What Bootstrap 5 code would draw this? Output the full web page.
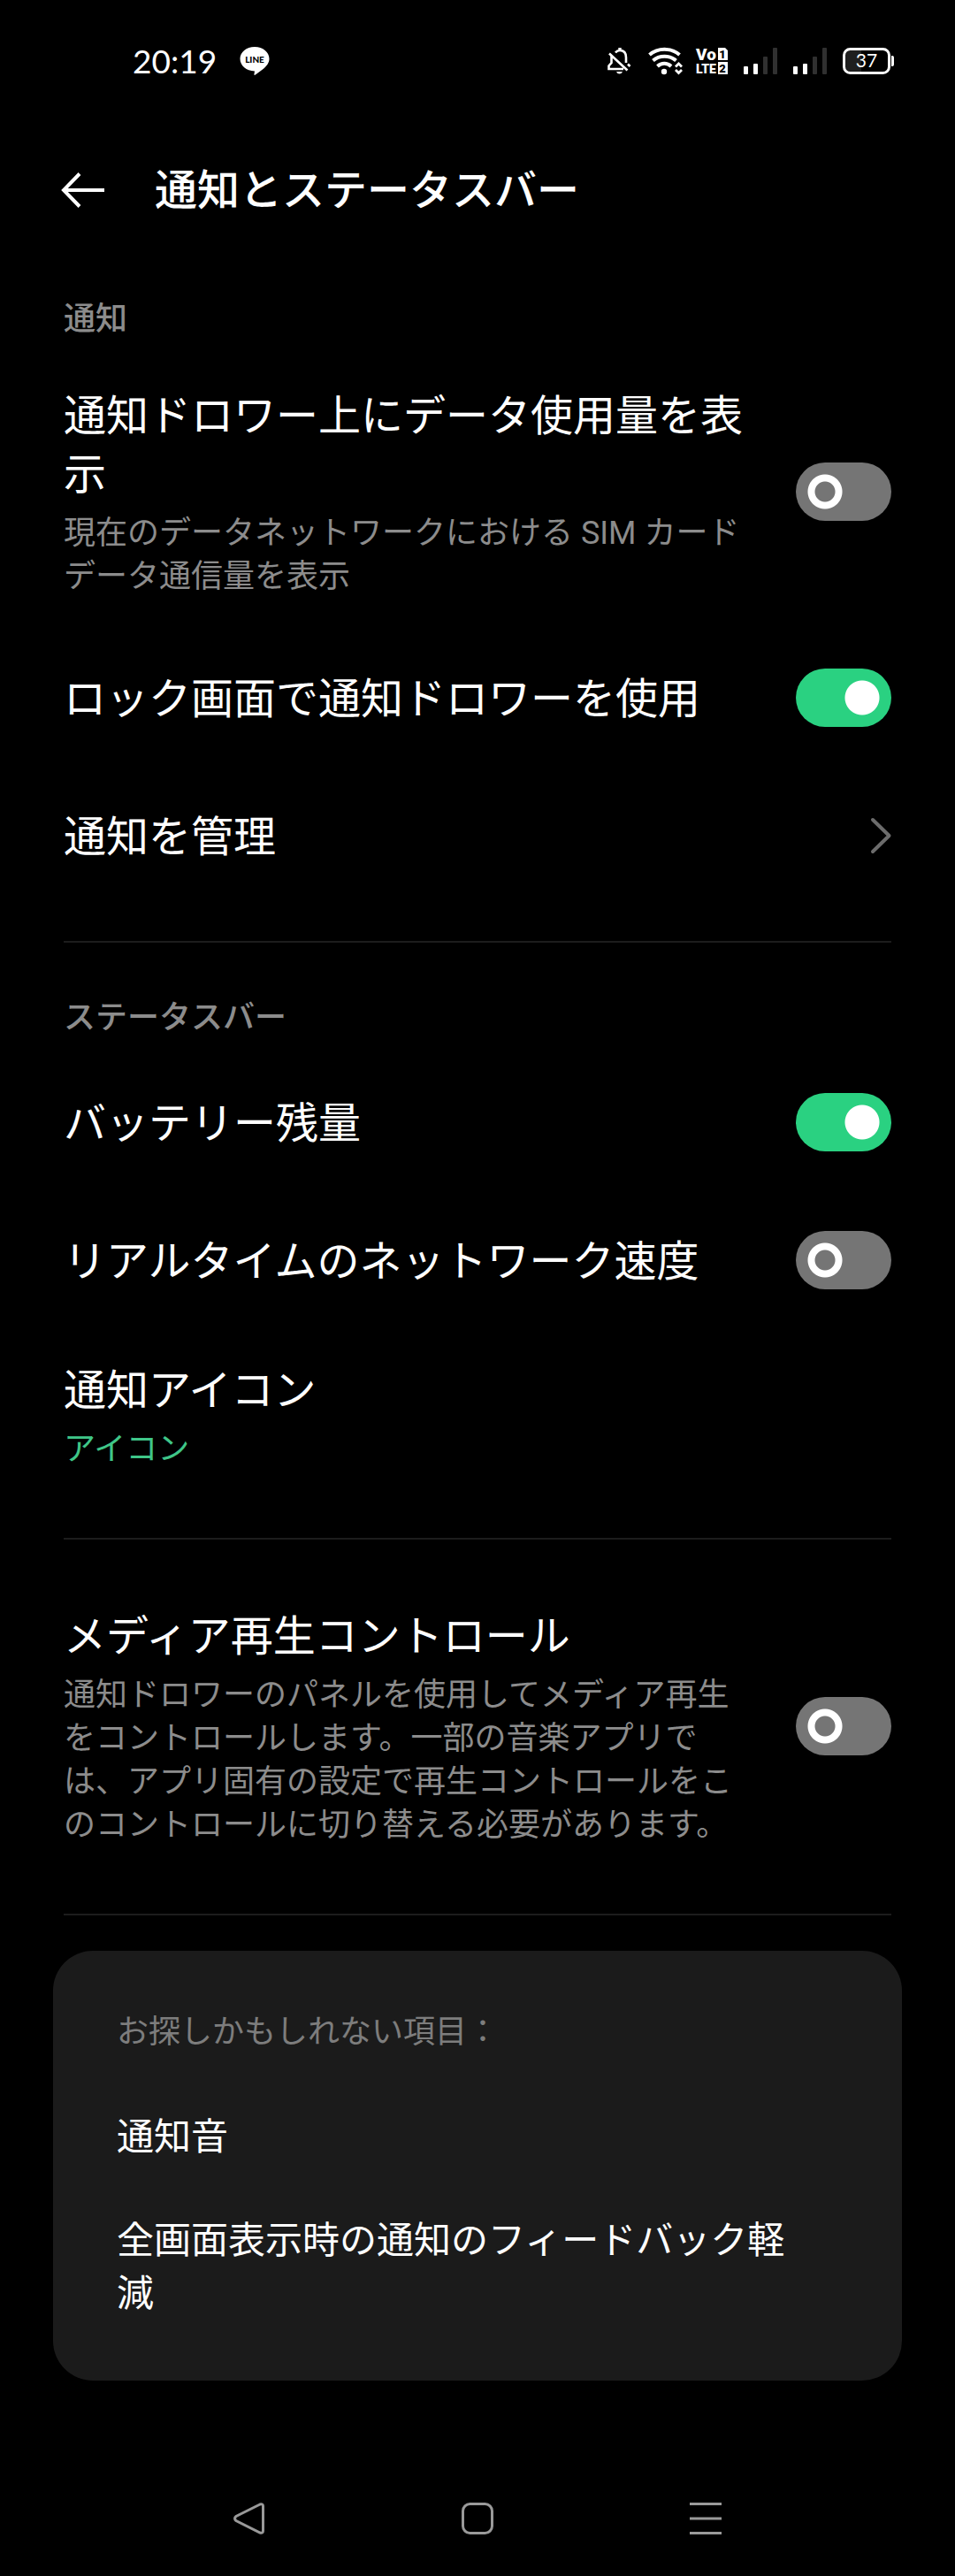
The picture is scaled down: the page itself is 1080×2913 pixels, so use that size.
<!DOCTYPE html>
<html lang="ja" data-bs-theme="dark">
<head>
<meta charset="utf-8">
<meta name="viewport" content="width=device-width, initial-scale=1">
<title>通知とステータスバー</title>
<link href="https://cdn.jsdelivr.net/npm/bootstrap@5.3.0/dist/css/bootstrap.min.css" rel="stylesheet">
<style>
  body { background: #000; color: #fff; font-family: Roboto, "Noto Sans CJK JP", sans-serif; }
  svg { display: block; flex: none; overflow: visible; }

  .status-bar { height: 138px; padding: 0 69px 0 150px; }
  .clock { font: 400 37px/48px Lato, sans-serif; }
  .status-left { gap: 26px; }
  .status-right { gap: 15px; }

  .app-bar { height: 122px; padding: 0 69px; gap: 56px; }
  .app-title { font-size: 48px; line-height: 66px; font-weight: 500; padding-top: 2px; }

  .settings-list { padding: 0 72px; }
  .group-label { font-size: 36px; line-height: 48px; font-weight: 500; color: #8c8c8c; margin: 61px 0 16px; }
  .setting-row { min-height: 156px; padding: 34px 0; gap: 48px; color: #fff; }
  .setting-text { padding-top: 3px; }
  .setting-name { font-size: 48px; line-height: 66px; }
  .setting-note { font-size: 36px; line-height: 49px; color: #8c8c8c; margin-top: 9px; }
  .note-accent { color: #3fc688; }
  .rule { height: 2px; margin: 41px 0 40px; background: #1c1c1c; border: 0; opacity: 1; }

  .toggle.form-check-input {
    width: 108px; height: 66px; margin: 0; border: 0; border-radius: 33px; flex: none;
    background-color: #757575;
    background-image: radial-gradient(circle at 33px 33px, transparent 11px, #fff 12px, #fff 19px, transparent 20px);
    background-size: 100% 100%; background-position: 0 0;
  }
  .toggle.form-check-input:checked {
    background-color: #2ad181;
    background-image: radial-gradient(circle at 75px 33px, #fff 19px, transparent 20px);
  }

  .related { margin: 0 60px; padding: 68px 96px 68px 72px; background: #1b1b1b; border-radius: 45px; }
  .related-label { font-size: 36px; line-height: 48px; color: #7d7d7d; margin-bottom: 65px; }
  .related-items { gap: 57px; }
  .related-items a { font-size: 42px; line-height: 60px; color: #fff; }

  .nav-keys { height: 131px; margin-top: 90px; }
  .nav-keys button { width: 258px; }
</style>
</head>
<body>
<header>
  <div class="status-bar d-flex align-items-center justify-content-between mb-3">
    <div class="status-left d-flex align-items-center">
      <span class="clock">20:19</span>
      <svg width="34" height="32" viewBox="0 0 34 32" role="img" aria-label="LINE">
        <path fill="#fff" d="M17 0C26.400 0 33.500 6 33.500 13.500C33.500 18 30.500 22 26 25.500L17.500 31.800C16.500 32.200 16.300 31.500 16.500 30.500L17 27.400C7.500 27.400 .5 21 .5 13.500S7.600 0 17 0Z"/>
        <text x="17" y="18" text-anchor="middle" font-family="Lato, sans-serif" font-size="10" font-weight="900" fill="#000">LINE</text>
      </svg>
    </div>
    <div class="status-right d-flex align-items-center">
      <svg width="34" height="32" viewBox="0 0 34 32" fill="none" stroke="#fff" stroke-width="2.600" aria-hidden="true">
        <path d="M12 6.500C13 5.200 15 4 17 4C21.500 4 24 7 24 12V18M7.500 10.500V18L4.500 21.500V25H21M26 19.500L28.500 22M5 7.500L25.500 26.500"/>
        <path d="M15.300 1H18.700V4H15.300ZM13 28H20Q19 30.500 16.500 30.500Q14 30.500 13 28Z" fill="#fff" stroke="none"/>
      </svg>
      <svg width="39" height="32" viewBox="0 0 39 32" fill="none" stroke="#fff" stroke-width="4" aria-hidden="true">
        <path d="M1.500 9C11 .6 26 .6 35.500 9M5.500 15.500C12.500 9 24.500 9 31.500 15.500M10.500 22C15 17.800 21.500 17.800 26 22"/>
        <circle cx="18" cy="28" r="3.200" fill="#fff" stroke="none"/>
        <path stroke-width="2.800" d="M31 22.500L34.500 19L38 22.500M31 26L34.500 29.500L38 26"/>
      </svg>
      <svg width="36" height="32" viewBox="0 0 36 32" role="img" aria-label="VoLTE 1 2" font-family="Roboto, sans-serif" font-weight="900" fill="#fff">
        <text x="0" y="15" font-size="19">Vo</text>
        <text x="0" y="30" font-size="14">LTE</text>
        <path d="M25 1H33L36 4V15H25ZM25 17H36V31H25Z"/>
        <g font-size="13" fill="#000" text-anchor="middle">
          <text x="30" y="13">1</text>
          <text x="30" y="29">2</text>
        </g>
      </svg>
      <svg width="44" height="32" viewBox="-3 0 44 32" fill="#fff" aria-hidden="true">
        <rect x="0" y="22" width="5" height="9" rx="1"/><rect x="11" y="19" width="5" height="12" rx="1"/>
        <g fill="#303030"><rect x="22" y="11" width="5" height="20" rx="1"/><rect x="33" y="1" width="5" height="30" rx="1"/></g>
      </svg>
      <svg width="41" height="32" viewBox="0 0 41 32" fill="#fff" aria-hidden="true">
        <rect x="0" y="22" width="5" height="9" rx="1"/><rect x="11" y="19" width="5" height="12" rx="1"/>
        <g fill="#303030"><rect x="22" y="11" width="5" height="20" rx="1"/><rect x="33" y="1" width="5" height="30" rx="1"/></g>
      </svg>
      <svg width="58" height="32" viewBox="0 0 58 32" role="img" aria-label="37%">
        <path fill="#1f1f1f" d="M3 3H21V29H3Z"/>
        <rect x="1.500" y="2.500" width="51" height="27" rx="7" fill="none" stroke="#fff" stroke-width="3"/>
        <path fill="#fff" d="M55 10H56Q58 10 58 12V20Q58 22 56 22H55Z"/>
        <text x="27" y="23" text-anchor="middle" font-family="Lato, sans-serif" font-size="21" fill="#fff">37</text>
      </svg>
    </div>
  </div>
  <div class="app-bar d-flex align-items-center">
    <button type="button" class="btn p-0 border-0" aria-label="戻る">
      <svg width="50" height="40" viewBox="0 0 50 40" fill="none" stroke="#fff" stroke-width="4"><path d="M21 1.500L3 20L21 38.500M3 20H49"/></svg>
    </button>
    <h1 class="app-title mb-0">通知とステータスバー</h1>
  </div>
</header>

<main>
  <div class="settings-list">
    <section>
      <h2 class="group-label">通知</h2>
      <label class="setting-row d-flex align-items-center justify-content-between" for="data-usage">
        <span class="setting-text">
          <span class="setting-name d-block">通知ドロワー上にデータ使用量を表示</span>
          <span class="setting-note d-block">現在のデータネットワークにおける SIM カードデータ通信量を表示</span>
        </span>
        <input class="toggle form-check-input" type="checkbox" role="switch" id="data-usage">
      </label>
      <label class="setting-row d-flex align-items-center justify-content-between" for="lock-drawer">
        <span class="setting-text setting-name">ロック画面で通知ドロワーを使用</span>
        <input class="toggle form-check-input" type="checkbox" role="switch" id="lock-drawer" checked>
      </label>
      <a class="setting-row d-flex align-items-center justify-content-between text-decoration-none" href="#manage">
        <span class="setting-text setting-name">通知を管理</span>
        <svg width="24" height="42" viewBox="0 0 24 42" fill="none" stroke="#6c6c6c" stroke-width="4" stroke-linecap="round" stroke-linejoin="round" aria-hidden="true"><path d="M3 3L21.500 21L3 39"/></svg>
      </a>
    </section>
    <hr class="rule">
    <section>
      <h2 class="group-label">ステータスバー</h2>
      <label class="setting-row d-flex align-items-center justify-content-between" for="battery">
        <span class="setting-text setting-name">バッテリー残量</span>
        <input class="toggle form-check-input" type="checkbox" role="switch" id="battery" checked>
      </label>
      <label class="setting-row d-flex align-items-center justify-content-between" for="net-speed">
        <span class="setting-text setting-name">リアルタイムのネットワーク速度</span>
        <input class="toggle form-check-input" type="checkbox" role="switch" id="net-speed">
      </label>
      <a class="setting-row d-block text-decoration-none" href="#icons">
        <span class="setting-text d-block">
          <span class="setting-name d-block">通知アイコン</span>
          <span class="setting-note note-accent d-block">アイコン</span>
        </span>
      </a>
    </section>
    <hr class="rule">
    <section>
      <label class="setting-row d-flex align-items-center justify-content-between" for="media">
        <span class="setting-text">
          <span class="setting-name d-block">メディア再生コントロール</span>
          <span class="setting-note d-block">通知ドロワーのパネルを使用してメディア再生をコントロールします。一部の音楽アプリでは、アプリ固有の設定で再生コントロールをこのコントロールに切り替える必要があります。</span>
        </span>
        <input class="toggle form-check-input" type="checkbox" role="switch" id="media">
      </label>
    </section>
    <hr class="rule">
  </div>
  <section class="related">
    <p class="related-label">お探しかもしれない項目：</p>
    <div class="related-items d-flex flex-column">
      <a class="text-decoration-none" href="#sound">通知音</a>
      <a class="text-decoration-none" href="#fullscreen">全画面表示時の通知のフィードバック軽減</a>
    </div>
  </section>
</main>

<nav class="nav-keys d-flex justify-content-center align-items-center" aria-label="ナビゲーション">
  <button type="button" class="btn p-0 border-0 d-flex justify-content-center" aria-label="戻る">
    <svg width="36" height="36" viewBox="0 0 36 36" fill="none" stroke="#999" stroke-width="3"><path d="M30 2L3 15.500Q0 18 3 20.500L30 34Q33.500 35 33.500 32V4Q33.500 1 30 2Z"/></svg>
  </button>
  <button type="button" class="btn p-0 border-0 d-flex justify-content-center" aria-label="ホーム">
    <svg width="36" height="36" viewBox="0 0 36 36" fill="none" stroke="#999" stroke-width="3"><rect x="1.500" y="1.500" width="33" height="33" rx="8"/></svg>
  </button>
  <button type="button" class="btn p-0 border-0 d-flex justify-content-center" aria-label="履歴">
    <svg width="36" height="36" viewBox="0 0 36 36" fill="none" stroke="#999" stroke-width="3"><path d="M0 1.500H36M0 18H36M0 34.500H36"/></svg>
  </button>
</nav>
<script src="https://cdn.jsdelivr.net/npm/bootstrap@5.3.0/dist/js/bootstrap.bundle.min.js"></script>
</body>
</html>
